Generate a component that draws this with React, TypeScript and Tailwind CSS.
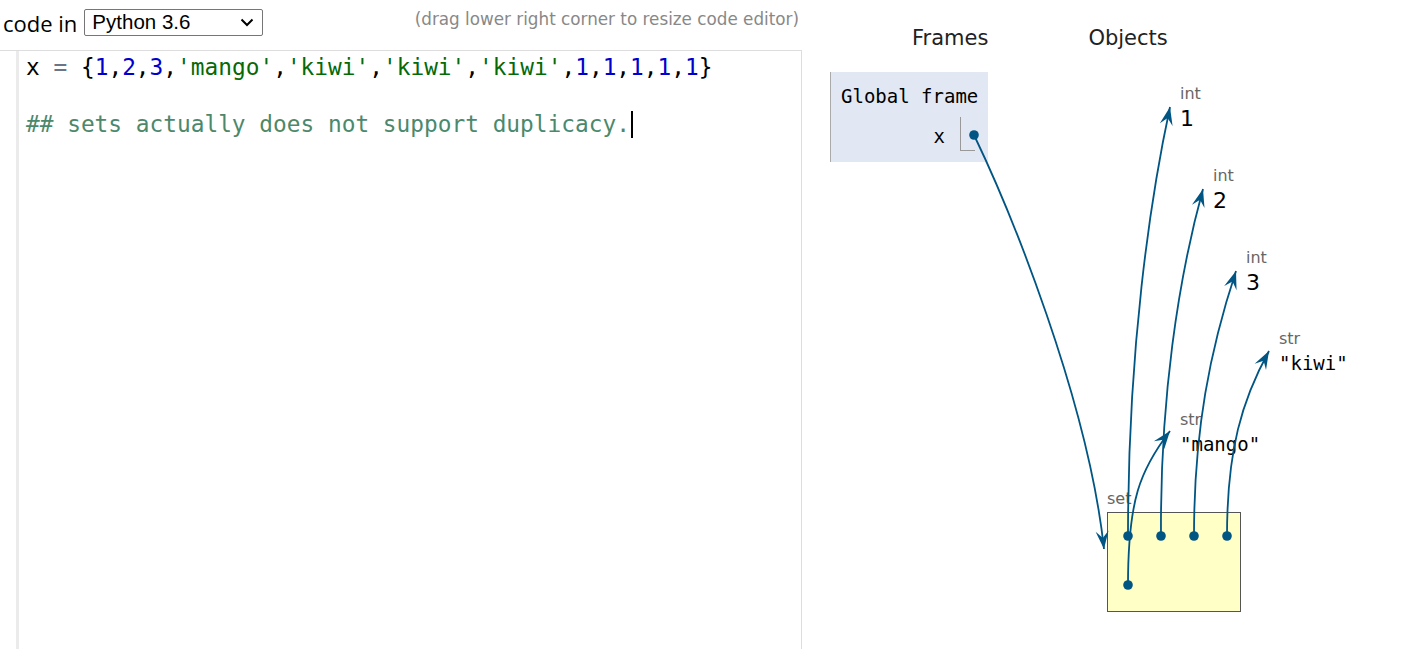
import React from 'react';

type Pt = [number, number];

const LINK = '#005583';

// bezier links from the python tutor style visualizer, in page coordinates
const links: { p: Pt[] }[] = [
  { p: [[974, 135], [1010, 210], [1088, 400], [1104, 549]] },
  { p: [[1128, 536], [1128, 350], [1150, 200], [1170, 107]] },
  { p: [[1161, 536], [1160, 400], [1178, 280], [1203, 189]] },
  { p: [[1194, 536], [1194, 430], [1210, 350], [1236, 271]] },
  { p: [[1227, 536], [1227, 450], [1242, 400], [1269, 351]] },
  { p: [[1128, 585], [1128, 500], [1140, 470], [1170, 431]] },
];

const dots: Pt[] = [
  [974, 135],
  [1128, 536],
  [1161, 536],
  [1194, 536],
  [1227, 536],
  [1128, 585],
];

function arrowHead(tip: Pt, from: Pt, len = 18, w = 13) {
  const dx = tip[0] - from[0];
  const dy = tip[1] - from[1];
  const d = Math.hypot(dx, dy) || 1;
  const ux = dx / d;
  const uy = dy / d;
  const px = -uy;
  const py = ux;
  const bx = tip[0] - ux * len;
  const by = tip[1] - uy * len;
  const nx = tip[0] - ux * len * 0.62;
  const ny = tip[1] - uy * len * 0.62;
  return [
    [tip[0], tip[1]],
    [bx + (px * w) / 2, by + (py * w) / 2],
    [nx, ny],
    [bx - (px * w) / 2, by - (py * w) / 2],
  ]
    .map((q) => q.join(','))
    .join(' ');
}

const Num = ({ children }: { children: React.ReactNode }) => <span className="text-[#0000cd]">{children}</span>;
const Str = ({ children }: { children: React.ReactNode }) => <span className="text-[#036a07]">{children}</span>;

const TypeLabel = ({ children }: { children: React.ReactNode }) => (
  <div className="text-[16px] leading-[20px] text-[#666] font-['DejaVu_Sans',sans-serif]">{children}</div>
);

const App = () => {
  return (
    <div className="relative flex w-[1409px] h-[649px] bg-white overflow-hidden">
      {/* left: code editor */}
      <div className="w-[802px] flex flex-col">
        <div className="h-[50px] flex items-start pt-[9px]">
          <span className="ml-[3px] mt-[1px] text-[22px] leading-[26px] text-black font-['Open_Sans',sans-serif]">code in</span>
          <div className="ml-[7px] w-[179px] h-[27px] border border-[#767676] rounded-[2px] flex items-center px-[7px]">
            <span className="text-[20.5px] leading-none text-black font-['Liberation_Sans',sans-serif]">Python 3.6</span>
            <svg className="ml-auto mr-[1px]" width="14" height="9" viewBox="0 0 14 9">
              <path d="M1.5 1.5 L7 7 L12.5 1.5" fill="none" stroke="#000" strokeWidth="2" />
            </svg>
          </div>
          <span className="ml-auto mr-[3px] mt-[0px] text-[16.8px] leading-[20px] text-[#888] font-['DejaVu_Sans',sans-serif]">
            (drag lower right corner to resize code editor)
          </span>
        </div>
        <div className="flex-1 flex border-t border-r border-[#dddddd]">
          <div className="w-[19px] border-r-[3px] border-[#ebebeb]" />
          <div className="pl-[7px] pt-[2px] font-['DejaVu_Sans_Mono',monospace] text-[22.8px] leading-[28.5px] text-black whitespace-pre">
            <div>
              x <span className="text-[#687687]">=</span> {'{'}
              <Num>1</Num>,<Num>2</Num>,<Num>3</Num>,<Str>'mango'</Str>,<Str>'kiwi'</Str>,<Str>'kiwi'</Str>,<Str>'kiwi'</Str>,
              <Num>1</Num>,<Num>1</Num>,<Num>1</Num>,<Num>1</Num>,<Num>1</Num>
              {'}'}
            </div>
            <div>&nbsp;</div>
            <div className="text-[#4c886b]">
              ## sets actually does not support duplicacy.
              <span className="inline-block ml-[1px] w-[2px] h-[27px] bg-black align-[-6px]" />
            </div>
          </div>
        </div>
      </div>

      {/* right: frames and objects */}
      <div className="flex-1 flex flex-col pt-[25px]">
        <div className="flex pl-[110px] text-[21px] leading-[26px] text-[#222] font-['DejaVu_Sans',sans-serif]">
          <span>Frames</span>
          <span className="ml-[100px]">Objects</span>
        </div>
        <div className="ml-[28px] mt-[21px] w-[158px] h-[90px] bg-[#e2e8f3] border-l border-[#aaaaaa] font-['DejaVu_Sans_Mono',monospace] text-[19px] text-black">
          <div className="pl-[10px] pt-[12px] leading-[24px]">Global frame</div>
          <div className="flex justify-end items-start mt-[9px] pr-[13px]">
            <span className="mt-[7px] leading-[24px]">x</span>
            <div className="ml-[15px] w-[15px] h-[34px] border-l border-b border-[#999]" />
          </div>
        </div>
      </div>

      {/* heap objects (diagram nodes) */}
      <div className="absolute left-[1180px] top-[84px]">
        <TypeLabel>int</TypeLabel>
        <div className="mt-[2px] text-[22px] leading-[26px] font-['DejaVu_Sans',sans-serif]">1</div>
      </div>
      <div className="absolute left-[1213px] top-[166px]">
        <TypeLabel>int</TypeLabel>
        <div className="mt-[2px] text-[22px] leading-[26px] font-['DejaVu_Sans',sans-serif]">2</div>
      </div>
      <div className="absolute left-[1246px] top-[248px]">
        <TypeLabel>int</TypeLabel>
        <div className="mt-[2px] text-[22px] leading-[26px] font-['DejaVu_Sans',sans-serif]">3</div>
      </div>
      <div className="absolute left-[1279px] top-[329px]">
        <TypeLabel>str</TypeLabel>
        <div className="mt-[1px] text-[19px] leading-[26px] font-['DejaVu_Sans_Mono',monospace]">"kiwi"</div>
      </div>
      <div className="absolute left-[1180px] top-[410px]">
        <TypeLabel>str</TypeLabel>
        <div className="mt-[1px] text-[19px] leading-[26px] font-['DejaVu_Sans_Mono',monospace]">"mango"</div>
      </div>
      <div className="absolute left-[1107px] top-[489px]">
        <TypeLabel>set</TypeLabel>
        <div className="mt-[3px] w-[134px] h-[100px] bg-[#ffffc6] border border-[#555]" />
      </div>

      <svg className="absolute left-0 top-0 pointer-events-none" width="1409" height="649">
        {links.map(({ p }, i) => (
          <g key={i}>
            <path
              d={`M${p[0][0]} ${p[0][1]} C ${p[1][0]} ${p[1][1]}, ${p[2][0]} ${p[2][1]}, ${p[3][0]} ${p[3][1]}`}
              fill="none"
              stroke={LINK}
              strokeWidth="1.8"
            />
            <polygon points={arrowHead(p[3], p[2])} fill={LINK} />
          </g>
        ))}
        {dots.map(([x, y], i) => (
          <circle key={i} cx={x} cy={y} r="4.8" fill={LINK} />
        ))}
      </svg>
    </div>
  );
};

export default App;
